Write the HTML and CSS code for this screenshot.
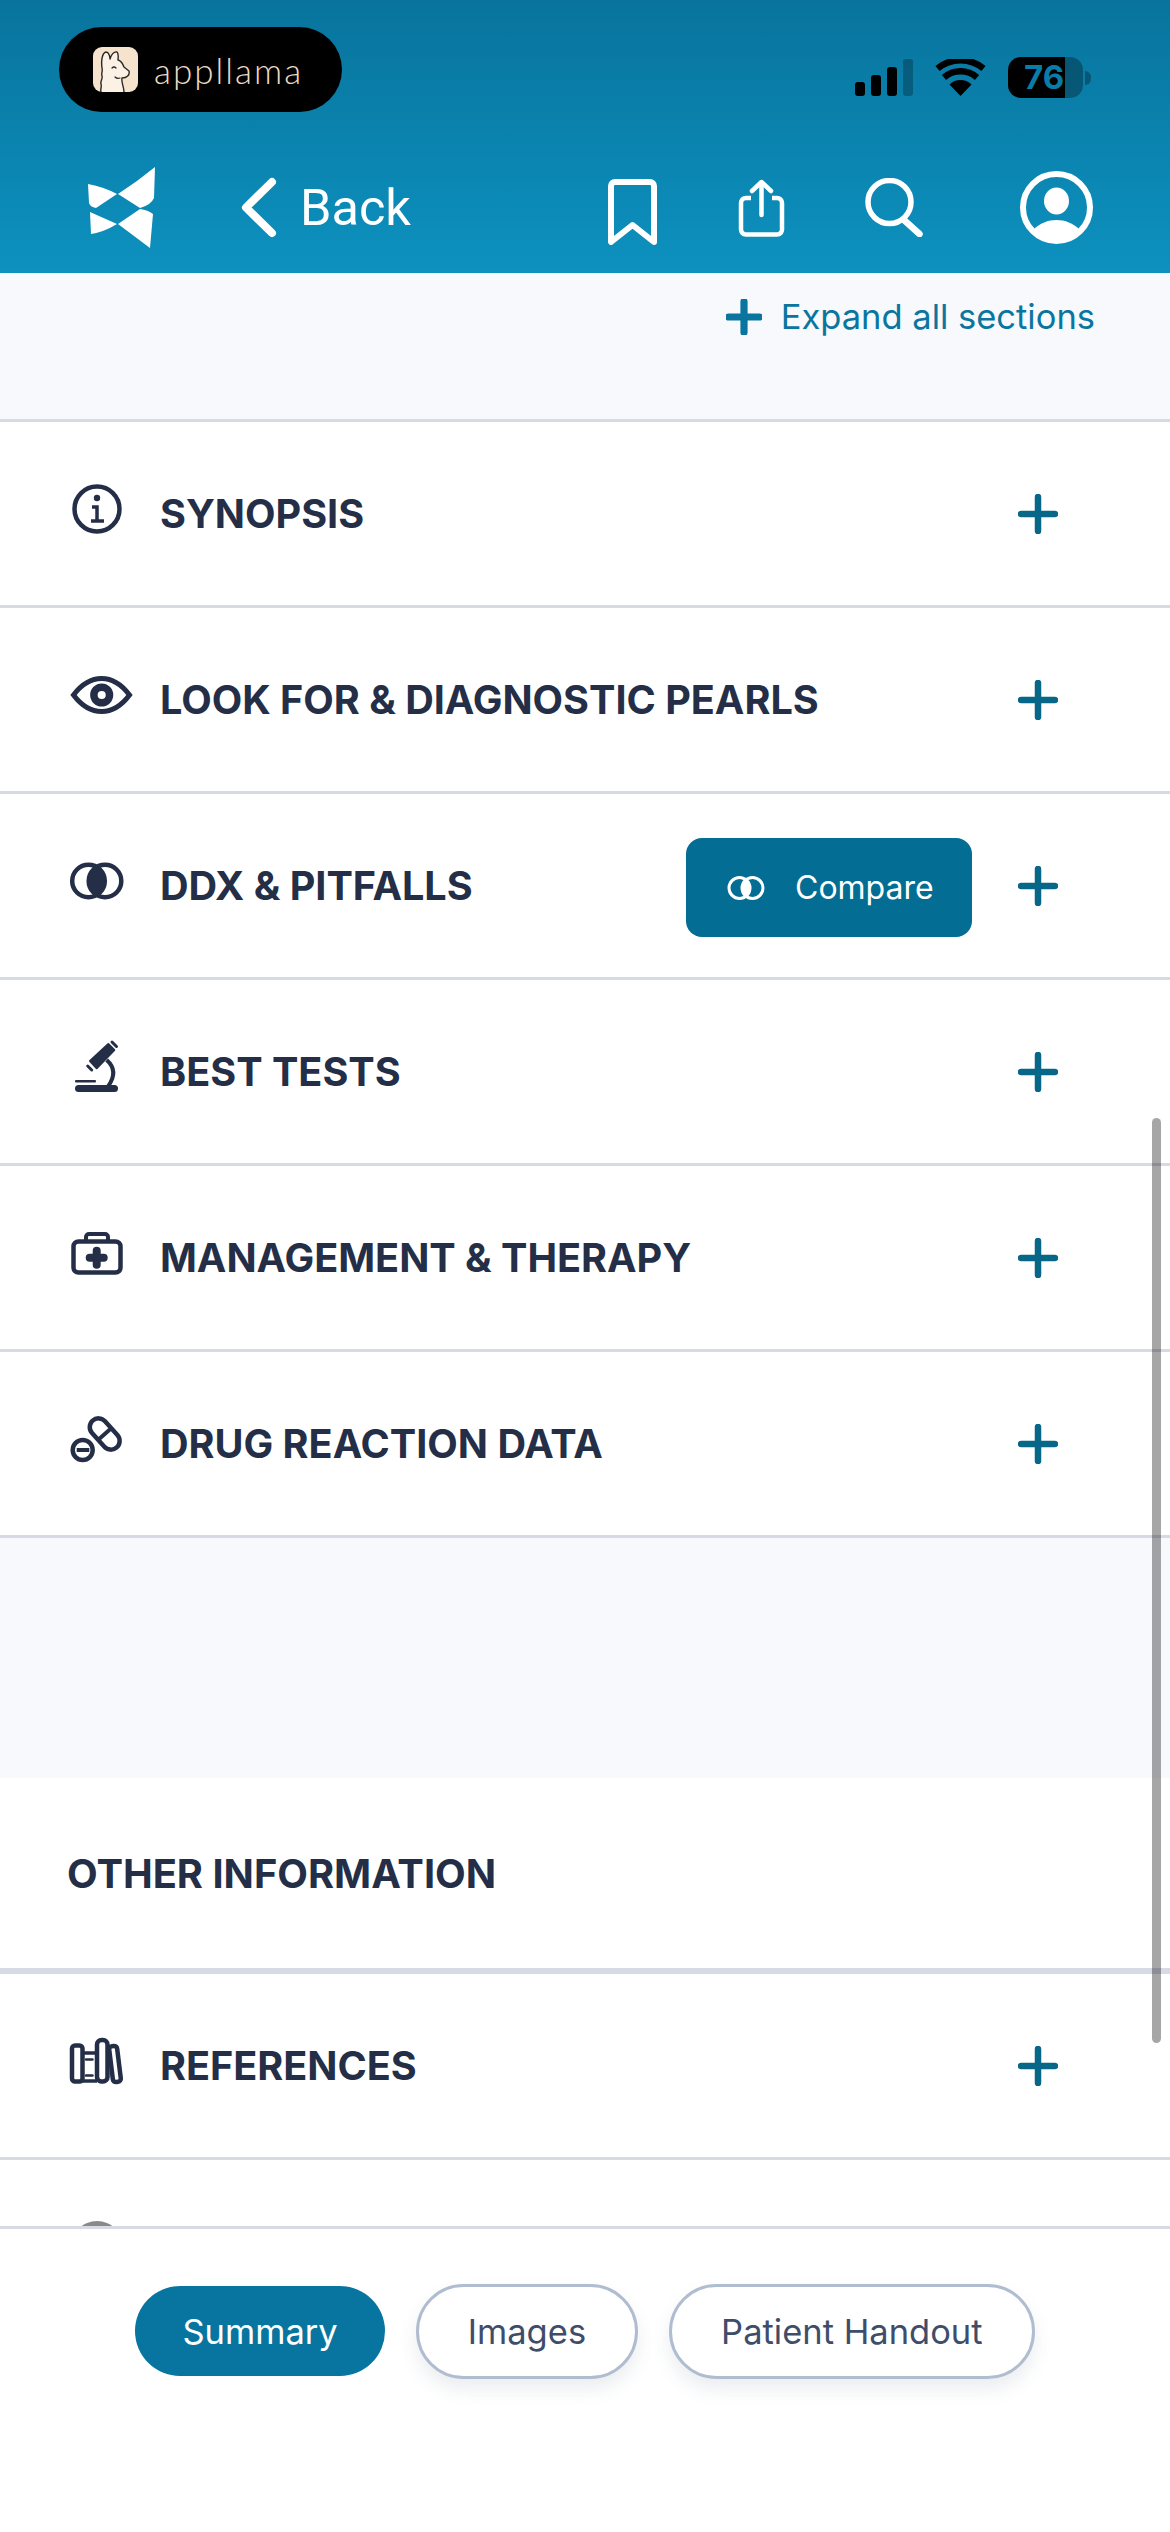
FILE: index.html
```html
<!DOCTYPE html>
<html lang="en">
<head>
    <meta charset="UTF-8">
    <meta name="viewport" content="width=device-width, initial-scale=1.0">
    <title>Summary</title>
    <link rel="stylesheet" href="styles.css">
</head>
<body>
    <header class="top">
        <div class="status">
            <div class="app-pill">
                <svg class="llama" viewBox="0 0 45 45">
                    <rect width="45" height="45" rx="9" fill="#f6e3cd"/>
                    <path d="M9 45V24C8 16 9 6 13 5C16 5 17 10 17 12C18 8 21 4 24 5C26 7 25 11 25 13C29 14 30 18 31 20L36 24C37 28 34 31 29 31L31 45Z" fill="#fbf1e4"/>
                    <path d="M8 45C7 42 9 40 8 37C7 34 10 32 9 29C8 26 10 24 9 21C8 14 9 6 13 5C16 5 17 10 17 12C18 8 21 4 24 5C26 7 25 11 25 13C29 14 30 18 31 20L36 24C37 28 34 31 29 31C28 35 31 40 31 45" fill="none" stroke="#2b2a28" stroke-width="1.4" stroke-linecap="round" stroke-linejoin="round"/>
                    <path d="M19 21q2-2 4 0M27 31q-3 1-5-1" fill="none" stroke="#2b2a28" stroke-width="1.2" stroke-linecap="round"/>
                </svg>
                <span class="app-name">appllama</span>
            </div>
            <div class="status-icons">
                <div class="signal">
                    <span class="bar bar-1"></span>
                    <span class="bar bar-2"></span>
                    <span class="bar bar-3"></span>
                    <span class="bar bar-4"></span>
                </div>
                <svg class="wifi" viewBox="0 0 51 37">
                    <path d="M25.5 37L14.5 25.5A16 16 0 0 1 36.5 25.5Z" fill="#000"/>
                    <path d="M9 18.5A25 25 0 0 1 42 18.5" fill="none" stroke="#000" stroke-width="6.5"/>
                    <path d="M2.5 9.5A36 36 0 0 1 48.5 9.5" fill="none" stroke="#000" stroke-width="6.5"/>
                </svg>
                <div class="battery"><span class="battery-level">76</span></div>
                <span class="battery-nub"></span>
            </div>
        </div>
        <nav class="toolbar">
            <svg class="logo" viewBox="0 0 67 81">
                <path d="M0 17Q16 20 29 27L8 41Q2 40 1 36Z M67 0L66 31Q63 38 52 41L30 27Q50 14 67 0Z M2 45L29 57Q16 65 3 67Z M52 42Q60 43 65 47L62 81L30 57Z" fill="#fff"/>
            </svg>
            <a class="back">
                <svg class="chevron" viewBox="0 0 36 61">
                    <path d="M31 5L5 30.5L31 56" fill="none" stroke="#fff" stroke-width="8" stroke-linecap="round" stroke-linejoin="round"/>
                </svg>
                <span class="back-label">Back</span>
            </a>
            <svg class="tool tool-bookmark" viewBox="0 0 49 66">
                <path d="M3 63V7A4 4 0 0 1 7 3H42A4 4 0 0 1 46 7V63L24.5 46Z" fill="none" stroke="#fff" stroke-width="6" stroke-linejoin="round"/>
            </svg>
            <svg class="tool tool-share" viewBox="0 0 47 58">
                <path d="M13 19H8A5 5 0 0 0 3 24V50A5 5 0 0 0 8 55.500H39A5 5 0 0 0 44 50V24A5 5 0 0 0 39 19H34" fill="none" stroke="#fff" stroke-width="4.500"/>
                <path d="M23.500 3V36M14 12L23.500 3L33 12" fill="none" stroke="#fff" stroke-width="4.500" stroke-linecap="round" stroke-linejoin="round"/>
            </svg>
            <svg class="tool tool-search" viewBox="0 0 58 59">
                <circle cx="24.500" cy="24" r="21.500" fill="none" stroke="#fff" stroke-width="5.500"/>
                <path d="M39 42L54.500 56" fill="none" stroke="#fff" stroke-width="6.500" stroke-linecap="round"/>
            </svg>
            <svg class="tool tool-profile" viewBox="0 0 73 73">
                <circle cx="36.500" cy="36.500" r="33.500" fill="none" stroke="#fff" stroke-width="6"/>
                <ellipse cx="36.500" cy="30" rx="12.500" ry="13.500" fill="#fff"/>
                <path d="M13 59C20 52 28 49 36.500 49C45 49 53 52 60 59A33.500 33.500 0 0 1 13 59Z" fill="#fff"/>
            </svg>
        </nav>
    </header>

    <main class="content">
        <div class="expand-bar">
            <svg class="plus plus-small" viewBox="0 0 40 40">
                <path d="M20 3V37M3 20H37" stroke="#0a76a0" stroke-width="8" stroke-linecap="round"/>
            </svg>
            <span class="expand-label">Expand all sections</span>
        </div>

        <section class="row">
            <svg class="row-icon" viewBox="0 0 60 60">
                <circle cx="30" cy="30" r="22.500" fill="none" stroke="#242f47" stroke-width="4.500"/>
                <circle cx="30" cy="19" r="3.200" fill="#242f47"/>
                <path d="M25 28H30V41M24 42H37" fill="none" stroke="#242f47" stroke-width="3.500"/>
            </svg>
            <h3 class="row-title">SYNOPSIS</h3>
            <svg class="plus" viewBox="0 0 40 40"><path d="M20 3V37M3 20H37" stroke="#066789" stroke-width="6.500" stroke-linecap="round"/></svg>
        </section>

        <section class="row">
            <svg class="row-icon" viewBox="0 0 60 60">
                <path d="M6.500 30C14 20 24 13.500 34.700 13.500C45 13.500 55 20 62.500 30C55 40 45 46.500 34.700 46.500C24 46.500 14 40 6.500 30Z" fill="none" stroke="#242f47" stroke-width="5"/>
                <circle cx="34.700" cy="30" r="7.800" fill="none" stroke="#242f47" stroke-width="7.500"/>
            </svg>
            <h3 class="row-title">LOOK FOR &amp; DIAGNOSTIC PEARLS</h3>
            <svg class="plus" viewBox="0 0 40 40"><path d="M20 3V37M3 20H37" stroke="#066789" stroke-width="6.500" stroke-linecap="round"/></svg>
        </section>

        <section class="row">
            <svg class="row-icon" viewBox="0 0 60 60">
                <circle cx="21.500" cy="30" r="16.300" fill="none" stroke="#242f47" stroke-width="4.500"/>
                <circle cx="38" cy="30" r="16.300" fill="none" stroke="#242f47" stroke-width="4.500"/>
                <path d="M29.750 16A16.300 16.300 0 0 1 29.750 44A16.300 16.300 0 0 1 29.750 16Z" fill="#242f47"/>
            </svg>
            <h3 class="row-title">DDX &amp; PITFALLS</h3>
            <button class="compare">
                <svg class="compare-icon" viewBox="0 0 38 26">
                    <circle cx="12.500" cy="13" r="10.500" fill="none" stroke="#fff" stroke-width="3"/>
                    <circle cx="25.500" cy="13" r="10.500" fill="none" stroke="#fff" stroke-width="3"/>
                    <path d="M19 4.800A10.500 10.500 0 0 1 19 21.200A10.500 10.500 0 0 1 19 4.800Z" fill="#fff"/>
                </svg>
                Compare
            </button>
            <svg class="plus plus-after-button" viewBox="0 0 40 40"><path d="M20 3V37M3 20H37" stroke="#066789" stroke-width="6.500" stroke-linecap="round"/></svg>
        </section>

        <section class="row">
            <svg class="row-icon" viewBox="0 0 60 60">
                <path d="M23 24L41.300 7L47.300 13L29.700 31.300Z" fill="#242f47" stroke="#242f47" stroke-width="2" stroke-linejoin="round"/>
                <path d="M45 5L49.500 9.500M20.700 29L24.700 33" stroke="#242f47" stroke-width="3" stroke-linecap="round"/>
                <path d="M39.700 23Q52 34 41.300 49" fill="none" stroke="#242f47" stroke-width="4"/>
                <rect x="8" y="48" width="43" height="7" rx="3.500" fill="#242f47"/>
                <rect x="8" y="43" width="21" height="2.500" rx="1" fill="#242f47"/>
            </svg>
            <h3 class="row-title">BEST TESTS</h3>
            <svg class="plus" viewBox="0 0 40 40"><path d="M20 3V37M3 20H37" stroke="#066789" stroke-width="6.500" stroke-linecap="round"/></svg>
        </section>

        <section class="row">
            <svg class="row-icon" viewBox="0 0 60 60">
                <rect x="6.500" y="18.500" width="47" height="31" rx="5" fill="none" stroke="#242f47" stroke-width="4.500"/>
                <path d="M19 18V14A3 3 0 0 1 22 11H38A3 3 0 0 1 41 14V18" fill="none" stroke="#242f47" stroke-width="4"/>
                <path d="M29.700 27.700V41.700M22.700 34.700H36.700" stroke="#242f47" stroke-width="8" stroke-linecap="round"/>
            </svg>
            <h3 class="row-title">MANAGEMENT &amp; THERAPY</h3>
            <svg class="plus" viewBox="0 0 40 40"><path d="M20 3V37M3 20H37" stroke="#066789" stroke-width="6.500" stroke-linecap="round"/></svg>
        </section>

        <section class="row">
            <svg class="row-icon" viewBox="0 0 60 60">
                <rect x="19.700" y="16.250" width="36" height="17.500" rx="8.750" transform="rotate(48 37.700 25)" fill="none" stroke="#242f47" stroke-width="4.500"/>
                <path d="M31 31L44.500 19" stroke="#242f47" stroke-width="4"/>
                <circle cx="15.700" cy="41" r="10" fill="none" stroke="#242f47" stroke-width="4.500"/>
                <path d="M9.700 41H22.300" stroke="#242f47" stroke-width="4"/>
            </svg>
            <h3 class="row-title">DRUG REACTION DATA</h3>
            <svg class="plus" viewBox="0 0 40 40"><path d="M20 3V37M3 20H37" stroke="#066789" stroke-width="6.500" stroke-linecap="round"/></svg>
        </section>

        <div class="spacer"></div>

        <div class="other-heading">
            <h2 class="other-title">OTHER INFORMATION</h2>
        </div>

        <section class="row">
            <svg class="row-icon" viewBox="0 0 60 60">
                <rect x="5" y="14.500" width="10.500" height="36" rx="3" fill="none" stroke="#242f47" stroke-width="4.500"/>
                <path d="M15 22H30M15 50H30" stroke="#242f47" stroke-width="3.500"/>
                <path d="M19 28.500H25.500M19 44.500H25.500" stroke="#242f47" stroke-width="2.500" stroke-linecap="round"/>
                <rect x="30" y="9" width="10.500" height="41.500" rx="4.500" fill="none" stroke="#242f47" stroke-width="4.500"/>
                <rect x="44" y="15" width="8" height="36" rx="3" transform="rotate(-7 48 33)" fill="none" stroke="#242f47" stroke-width="4.500"/>
            </svg>
            <h3 class="row-title">REFERENCES</h3>
            <svg class="plus" viewBox="0 0 40 40"><path d="M20 3V37M3 20H37" stroke="#066789" stroke-width="6.500" stroke-linecap="round"/></svg>
        </section>

        <section class="row">
            <svg class="row-icon" viewBox="0 0 60 60">
                <circle cx="30" cy="30" r="26" fill="#8a8a8a"/>
            </svg>
        </section>
    </main>

    <footer class="tabs">
        <a class="tab tab-active">Summary</a>
        <a class="tab">Images</a>
        <a class="tab">Patient Handout</a>
    </footer>

    <div class="scrollbar"></div>
</body>
</html>
```

FILE: styles.css
```css
* {
    box-sizing: border-box;
}
html, body {
    margin: 0;
    padding: 0;
}
body {
    position: relative;
    width: 1170px;
    height: 2532px;
    overflow: hidden;
    display: flex;
    flex-direction: column;
    background-color: #fff;
    font-family: Inter, "Liberation Sans", sans-serif;
    color: #242f47;
}

/* header */
.top {
    height: 273px;
    flex-shrink: 0;
    background: linear-gradient(180deg, #08749d 0%, #0d91bf 100%);
}
.status {
    display: flex;
    justify-content: space-between;
    padding: 27px 79px 0 59px;
    height: 165px;
}
.app-pill {
    display: flex;
    align-items: center;
    width: 283px;
    height: 85px;
    padding-left: 34px;
    background-color: #000;
    border-radius: 43px;
}
.llama {
    width: 45px;
    height: 45px;
}
.app-name {
    margin-left: 16px;
    font-family: Lato, sans-serif;
    font-weight: 300;
    font-size: 35px;
    letter-spacing: 2px;
    color: #ecd9c3;
}
.status-icons {
    display: flex;
    align-items: center;
    height: 41px;
    margin-top: 30px;
}
.signal {
    display: flex;
    align-items: flex-end;
    gap: 6px;
    height: 37px;
}
.bar {
    width: 10px;
    background-color: #000;
    border-radius: 3px;
}
.bar-1 {
    height: 14px;
}
.bar-2 {
    height: 21px;
}
.bar-3 {
    height: 29px;
}
.bar-4 {
    height: 37px;
    background-color: rgba(0, 0, 0, 0.25);
}
.wifi {
    width: 51px;
    height: 37px;
    margin-left: 22px;
}
.battery {
    width: 75px;
    height: 41px;
    margin-left: 22px;
    padding-left: 16px;
    border-radius: 13px;
    background: linear-gradient(90deg, #000 76%, rgba(0, 0, 0, 0.3) 76%);
}
.battery-level {
    font-family: Inter, sans-serif;
    font-weight: 700;
    font-size: 33px;
    line-height: 41px;
    color: #0a7ca8;
}
.battery-nub {
    width: 6px;
    height: 14px;
    margin-left: 2px;
    border-radius: 0 7px 7px 0;
    background-color: rgba(0, 0, 0, 0.3);
}

.toolbar {
    display: flex;
    align-items: center;
    height: 85px;
    padding: 0 77px 0 88px;
}
.logo {
    width: 67px;
    height: 81px;
}
.back {
    display: flex;
    align-items: center;
    margin-left: 86px;
}
.chevron {
    width: 36px;
    height: 61px;
}
.back-label {
    margin-left: 23px;
    font-family: Roboto, sans-serif;
    font-weight: 400;
    font-size: 50.5px;
    color: #fff;
}
.tool {
    flex-shrink: 0;
}
.tool-bookmark {
    width: 49px;
    height: 66px;
    margin-left: auto;
    margin-top: 9px;
}
.tool-share {
    width: 47px;
    height: 58px;
    margin-left: 81px;
}
.tool-search {
    width: 58px;
    height: 59px;
    margin-left: 80px;
}
.tool-profile {
    width: 73px;
    height: 73px;
    margin-left: 97px;
}

/* list */
.content {
    flex: 1;
    min-height: 0;
    overflow: hidden;
}
.expand-bar {
    display: flex;
    justify-content: flex-end;
    align-items: flex-start;
    height: 149px;
    padding: 26px 75px 0 0;
    background-color: #f7f9fd;
    border-bottom: 3px solid #d6dae5;
}
.plus {
    width: 40px;
    height: 40px;
    margin-left: auto;
    margin-right: 112px;
    flex-shrink: 0;
}
.plus-small {
    width: 36px;
    height: 36px;
    margin: 0 19px 0 0;
}
.plus-after-button {
    margin-left: 46px;
}
.expand-label {
    font-size: 34.5px;
    line-height: 36px;
    color: #0a76a0;
}
.row {
    display: flex;
    align-items: center;
    height: 186px;
    padding-left: 67px;
    background-color: #fff;
    border-bottom: 3px solid #d6dae5;
}
.row-icon {
    width: 60px;
    height: 60px;
    margin-right: 33px;
    margin-bottom: 10px;
    flex-shrink: 0;
    overflow: visible;
}
.row-title {
    margin: 0;
    font-size: 39.6px;
    font-weight: 700;
    color: #242f47;
}
.compare {
    display: flex;
    align-items: center;
    width: 286px;
    height: 99px;
    margin: 4px 0 0 auto;
    padding: 0 0 0 41px;
    border: none;
    border-radius: 16px;
    background-color: #046d94;
    font-family: Inter, sans-serif;
    font-size: 32px;
    color: #fff;
}
.compare-icon {
    width: 38px;
    height: 26px;
    margin-right: 30px;
}
.spacer {
    height: 240px;
    background-color: #f7f9fd;
}
.other-heading {
    display: flex;
    align-items: center;
    height: 196px;
    padding-left: 67px;
    border-bottom: 6px solid #d6dae5;
}
.other-title {
    margin: 0;
    font-size: 39.8px;
    font-weight: 700;
    color: #242f47;
}

/* bottom tabs */
.tabs {
    display: flex;
    justify-content: center;
    align-items: center;
    gap: 31px;
    height: 306px;
    flex-shrink: 0;
    padding-bottom: 99px;
    border-top: 3px solid #d6dae5;
    background-color: #fff;
}
.tab {
    display: flex;
    justify-content: center;
    align-items: center;
    height: 95px;
    padding: 0 49px;
    border: 3px solid #b0bdd0;
    border-radius: 48px;
    background-color: #fff;
    box-shadow: 0 10px 18px rgba(60, 80, 110, 0.1);
    font-size: 34.5px;
    color: #3f4d6b;
}
.tab-active {
    height: 90px;
    padding: 0 47px;
    border: none;
    background-color: #07759f;
    box-shadow: none;
    color: #fff;
}

.scrollbar {
    position: absolute;
    top: 1118px;
    right: 9px;
    width: 9px;
    height: 925px;
    border-radius: 5px;
    background-color: rgba(0, 0, 0, 0.35);
}
```
